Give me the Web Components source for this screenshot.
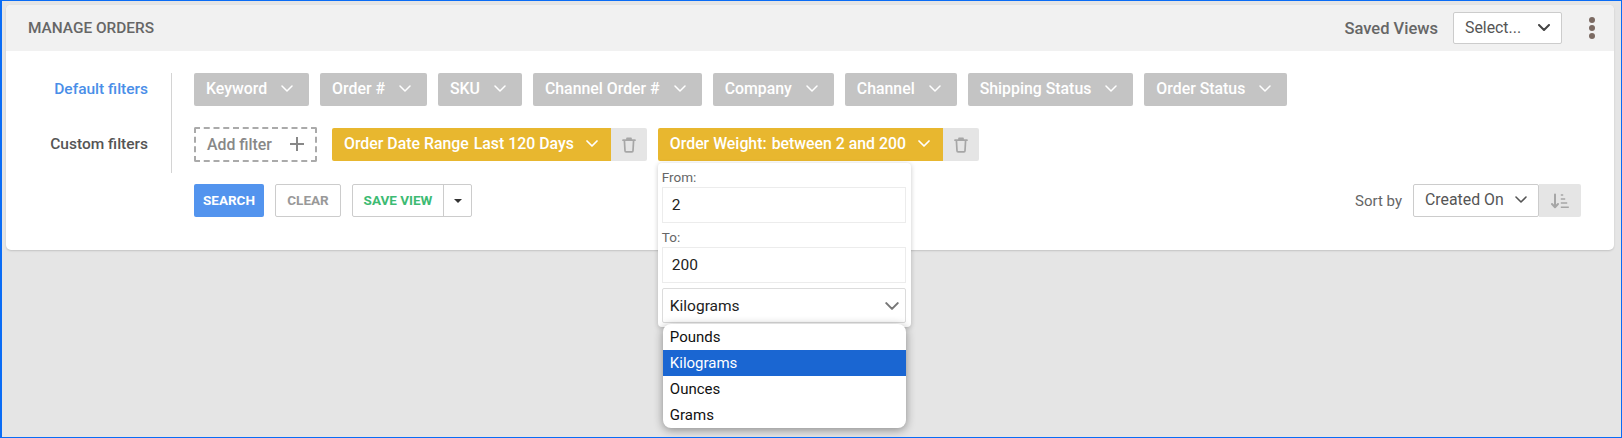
<!DOCTYPE html>
<html>
<head>
<meta charset="utf-8">
<style>
    html, body { margin: 0; padding: 0; }
    body { font-family: Roboto, "Liberation Sans", sans-serif; }
</style>
</head>
<body>
<orders-page>
    <orders-panel>
        <span slot="title">MANAGE ORDERS</span>
        <filter-row slot="filters" label="Default filters" active>
            <filter-chip>Keyword</filter-chip>
            <filter-chip>Order #</filter-chip>
            <filter-chip>SKU</filter-chip>
            <filter-chip>Channel Order #</filter-chip>
            <filter-chip>Company</filter-chip>
            <filter-chip>Channel</filter-chip>
            <filter-chip>Shipping Status</filter-chip>
            <filter-chip>Order Status</filter-chip>
        </filter-row>
        <filter-row slot="filters" label="Custom filters">
            <add-filter>Add filter</add-filter>
            <custom-chip name="Order Date Range" value="Last 120 Days"></custom-chip>
            <custom-chip name="Order Weight:" value="between 2 and 200">
                <weight-popover></weight-popover>
            </custom-chip>
        </filter-row>
    </orders-panel>
</orders-page>

<script>
const chevron = (w, h, color, sw) => `<svg width="${w}" height="${h}" viewBox="0 0 12 7" fill="none" stroke="${color}" stroke-width="${sw}" stroke-linecap="round" stroke-linejoin="round"><path d="M1 1l5 5 5-5"/></svg>`;
const trash = `<svg width="14" height="16" viewBox="0 0 14 16" fill="none" stroke="#a6a6a6" stroke-width="1.7" stroke-linecap="round" stroke-linejoin="round"><path d="M1 3.2h12M5 3V1.4h4V3M2.4 3.4l.6 10.4c0 .6.5 1.1 1.1 1.1h5.8c.6 0 1.1-.5 1.1-1.1l.6-10.4"/></svg>`;

// orders-page
const ordersPageTemplate = document.createElement("template");
ordersPageTemplate.innerHTML = /*html*/`
    <style>
        :host {
            display: block;
            box-sizing: border-box;
            height: 438px;
            overflow: hidden;
            background: #e5e5e5;
            border: 1px solid #0a6cf5;
            border-left-width: 2px;
            padding: 4px 7px 0 4px;
        }
    </style>
    <slot></slot>
`;
class OrdersPage extends HTMLElement {
    constructor() {
        super();
        this.attachShadow({mode: "open"});
        this.shadowRoot.appendChild(ordersPageTemplate.content.cloneNode(true));
    }
}
window.customElements.define("orders-page", OrdersPage);

// orders-panel
const ordersPanelTemplate = document.createElement("template");
ordersPanelTemplate.innerHTML = /*html*/`
    <style>
        :host {
            display: block;
            background: #fff;
            border-radius: 5px;
            box-shadow: 0 1px 2px rgba(0,0,0,.15);
            height: 245px;
            color: #555;
        }
        header {
            display: flex;
            align-items: center;
            height: 46px;
            background: #f1f1f1;
            border-radius: 5px 5px 0 0;
            padding: 0 18px 0 22px;
        }
        .title { flex: 1; font-size: 15.4px; font-weight: 500; color: #666; }
        .views { font-size: 16.5px; font-weight: 500; color: #666; margin-right: 15px; }
        .kebab { display: flex; flex-direction: column; gap: 2px; margin-left: 27px; width: 6px; margin-right: 1px; }
        .kebab i { width: 6px; height: 6px; border-radius: 50%; background: #7b6a62; }
        .body { padding: 22px 0 0 0; }
        .filters { display: grid; row-gap: 22px; }
        .actions { display: flex; align-items: center; padding: 11px 33px 0 188px; gap: 11px; }
        .spacer { flex: 1; }
        .sort { font-size: 15px; color: #666; }
        .sortbtn { width: 42px; height: 33px; background: #e5e5e5; border-radius: 0 2px 2px 0; display: flex; align-items: center; justify-content: center; margin-left: -11px; }
    </style>
    <header>
        <div class="title"><slot name="title"></slot></div>
        <span class="views">Saved Views</span>
        <select-box width="109" height="32" text="Select..." pad="11" dark></select-box>
        <div class="kebab"><i></i><i></i><i></i></div>
    </header>
    <div class="body">
        <div class="filters"><slot name="filters"></slot></div>
        <div class="actions">
            <action-button kind="search">SEARCH</action-button>
            <action-button kind="clear">CLEAR</action-button>
            <save-button></save-button>
            <span class="spacer"></span>
            <span class="sort">Sort by</span>
            <select-box width="126" height="33" text="Created On" pad="11"></select-box>
            <span class="sortbtn">
                <svg width="18" height="16" viewBox="0 0 18 16" fill="none" stroke="#a6a6a6" stroke-width="2" stroke-linecap="round" stroke-linejoin="round"><path d="M4 1.5v12.5M1 11l3 3.2 3-3.2"/><path d="M9.8 2h2.4M9.8 6h4.4M9.8 10h6.4M9.8 14.2h8" stroke-width="1.5" stroke-linecap="butt"/></svg>
            </span>
        </div>
    </div>
`;
class OrdersPanel extends HTMLElement {
    constructor() {
        super();
        this.attachShadow({mode: "open"});
        this.shadowRoot.appendChild(ordersPanelTemplate.content.cloneNode(true));
    }
}
window.customElements.define("orders-panel", OrdersPanel);

// filter-row
const filterRowTemplate = document.createElement("template");
filterRowTemplate.innerHTML = /*html*/`
    <style>
        :host {
            display: flex;
            align-items: stretch;
        }
        .label {
            box-sizing: border-box;
            width: 165px;
            padding-right: 23px;
            height: 33px;
            line-height: 32px;
            text-align: right;
            font-size: 15.5px;
            font-weight: 500;
            color: #555;
            white-space: nowrap;
        }
        :host([active]) .label { color: #4a8ee8; }
        .list {
            display: flex;
            gap: 11px;
            padding-left: 22px;
            border-left: 1px solid #d4d4d4;
        }
        :host([active]) .list { padding-bottom: 22px; margin-bottom: -22px; }
        :host(:not([active])) .list { padding-bottom: 12px; }
    </style>
    <div class="label"></div>
    <div class="list"><slot></slot></div>
`;
class FilterRow extends HTMLElement {
    constructor() {
        super();
        this.attachShadow({mode: "open"});
        this.shadowRoot.appendChild(filterRowTemplate.content.cloneNode(true));
        this.shadowRoot.querySelector(".label").textContent = this.getAttribute("label");
    }
}
window.customElements.define("filter-row", FilterRow);

// filter-chip
const filterChipTemplate = document.createElement("template");
filterChipTemplate.innerHTML = /*html*/`
    <style>
        :host {
            display: flex;
            align-items: center;
            height: 33px;
            box-sizing: border-box;
            padding: 0 16px 2px 12px;
            gap: 14px;
            background: #c4c4c4;
            border-radius: 2px;
            color: #fff;
            font-size: 15.85px;
            font-weight: 500;
            white-space: nowrap;
        }
    </style>
    <slot></slot>
    ${chevron(12, 7, "#fff", 1.5)}
`;
class FilterChip extends HTMLElement {
    constructor() {
        super();
        this.attachShadow({mode: "open"});
        this.shadowRoot.appendChild(filterChipTemplate.content.cloneNode(true));
    }
}
window.customElements.define("filter-chip", FilterChip);

// add-filter
const addFilterTemplate = document.createElement("template");
addFilterTemplate.innerHTML = /*html*/`
    <style>
        :host {
            display: flex;
            align-items: center;
            justify-content: space-between;
            box-sizing: border-box;
            width: 123px;
            height: 35px;
            margin: -1px 4px -1px 0;
            padding: 0 11px 1px 11px;
            border: 2px dashed #aaa;
            border-radius: 2px;
            color: #888;
            font-size: 15.85px;
            font-weight: 500;
        }
    </style>
    <slot></slot>
    <svg width="14" height="14" viewBox="0 0 14 14" stroke="#888" stroke-width="2"><path d="M7 0v14M0 7h14"/></svg>
`;
class AddFilter extends HTMLElement {
    constructor() {
        super();
        this.attachShadow({mode: "open"});
        this.shadowRoot.appendChild(addFilterTemplate.content.cloneNode(true));
    }
}
window.customElements.define("add-filter", AddFilter);

// custom-chip
const customChipTemplate = document.createElement("template");
customChipTemplate.innerHTML = /*html*/`
    <style>
        :host {
            display: flex;
            position: relative;
            height: 33px;
            font-size: 15.85px;
            white-space: nowrap;
        }
        .main {
            display: flex;
            align-items: center;
            box-sizing: border-box;
            padding: 0 13px 2px 12px;
            background: #e8b72f;
            color: #fff;
            font-weight: 500;
            border-radius: 2px 0 0 2px;
        }
        .name { margin-right: 5px; }
        .value { margin-right: 12px; }
        .del {
            width: 36px;
            display: flex;
            align-items: center;
            justify-content: center;
            background: #e5e5e5;
            border-radius: 0 2px 2px 0;
        }
    </style>
    <div class="main">
        <span class="name"></span><span class="value"></span>
        ${chevron(12, 7, "#fff", 1.7)}
    </div>
    <div class="del">${trash}</div>
    <slot></slot>
`;
class CustomChip extends HTMLElement {
    constructor() {
        super();
        this.attachShadow({mode: "open"});
        this.shadowRoot.appendChild(customChipTemplate.content.cloneNode(true));
        this.shadowRoot.querySelector(".name").textContent = this.getAttribute("name");
        this.shadowRoot.querySelector(".value").textContent = this.getAttribute("value");
    }
}
window.customElements.define("custom-chip", CustomChip);

// select-box
const selectBoxTemplate = document.createElement("template");
selectBoxTemplate.innerHTML = /*html*/`
    <style>
        :host {
            display: flex;
            align-items: center;
            justify-content: space-between;
            box-sizing: border-box;
            background: #fff;
            border: 1px solid #ccc;
            border-radius: 2px;
            color: #555;
            font-size: 15.85px;
        }
        .icon { display: flex; }
    </style>
    <span class="text"></span>
    <span class="icon"></span>
`;
class SelectBox extends HTMLElement {
    constructor() {
        super();
        this.attachShadow({mode: "open"});
        this.shadowRoot.appendChild(selectBoxTemplate.content.cloneNode(true));
        this.style.width = this.getAttribute("width") + "px";
        this.style.height = this.getAttribute("height") + "px";
        this.style.padding = `0 ${this.getAttribute("pad")}px 2px`;
        this.shadowRoot.querySelector(".text").textContent = this.getAttribute("text");
        const dark = this.hasAttribute("dark");
        this.shadowRoot.querySelector(".icon").innerHTML = chevron(12, 7, dark ? "#444" : "#555", dark ? 2 : 1.6);
    }
}
window.customElements.define("select-box", SelectBox);

// action-button
const actionButtonTemplate = document.createElement("template");
actionButtonTemplate.innerHTML = /*html*/`
    <style>
        :host {
            display: flex;
            align-items: center;
            justify-content: center;
            box-sizing: border-box;
            height: 33px;
            padding-bottom: 1px;
            border-radius: 2px;
            font-size: 13.5px;
            font-weight: 700;
        }
        :host([kind="search"]) { width: 70px; background: #5394ee; color: #fff; }
        :host([kind="clear"]) { width: 66px; background: #fff; color: #999; border: 1px solid #ccc; }
    </style>
    <slot></slot>
`;
class ActionButton extends HTMLElement {
    constructor() {
        super();
        this.attachShadow({mode: "open"});
        this.shadowRoot.appendChild(actionButtonTemplate.content.cloneNode(true));
    }
}
window.customElements.define("action-button", ActionButton);

// save-button
const saveButtonTemplate = document.createElement("template");
saveButtonTemplate.innerHTML = /*html*/`
    <style>
        :host {
            display: flex;
            box-sizing: border-box;
            width: 120px;
            height: 33px;
            background: #fff;
            border: 1px solid #ccc;
            border-radius: 2px;
            font-size: 13.5px;
            font-weight: 700;
            color: #3dbb73;
        }
        .main { flex: 1; display: flex; align-items: center; justify-content: center; padding-bottom: 1px; border-right: 1px solid #ccc; }
        .caret { width: 27px; display: flex; align-items: center; justify-content: center; }
        .caret i { border: 4px solid transparent; border-top: 4px solid #333; border-bottom: 0; display: block; }
    </style>
    <div class="main">SAVE VIEW</div>
    <div class="caret"><i></i></div>
`;
class SaveButton extends HTMLElement {
    constructor() {
        super();
        this.attachShadow({mode: "open"});
        this.shadowRoot.appendChild(saveButtonTemplate.content.cloneNode(true));
    }
}
window.customElements.define("save-button", SaveButton);

// weight-popover
const weightPopoverTemplate = document.createElement("template");
weightPopoverTemplate.innerHTML = /*html*/`
    <style>
        :host {
            position: absolute;
            left: 0;
            top: 35px;
            z-index: 2;
            box-sizing: border-box;
            width: 253px;
            height: 164px;
            padding: 7px 5px 0 4px;
            background: #fff;
            border-radius: 4px;
            box-shadow: 0 1px 5px rgba(0,0,0,.22);
            font-size: 13.5px;
            font-weight: 400;
            color: #666;
        }
        label { display: block; line-height: 15px; padding-bottom: 2px; }
        .field {
            box-sizing: border-box;
            height: 36px;
            margin-bottom: 7px;
            padding-left: 9px;
            line-height: 34px;
            border: 1px solid #ececec;
            color: #222;
            font-size: 15.5px;
        }
        .unit {
            box-sizing: border-box;
            display: flex;
            align-items: center;
            justify-content: space-between;
            height: 35px;
            margin-top: 5px;
            padding: 0 6px 0 7px;
            border: 1px solid #dcdcdc;
            border-radius: 2px;
            color: #222;
            font-size: 15.5px;
        }
    </style>
    <label>From:</label>
    <div class="field">2</div>
    <label>To:</label>
    <div class="field" style="margin-bottom:0">200</div>
    <div class="unit">Kilograms ${chevron(14, 8, "#777", 1.8)}</div>
    <option-list></option-list>
`;
class WeightPopover extends HTMLElement {
    constructor() {
        super();
        this.attachShadow({mode: "open"});
        this.shadowRoot.appendChild(weightPopoverTemplate.content.cloneNode(true));
    }
}
window.customElements.define("weight-popover", WeightPopover);

// option-list
const optionListTemplate = document.createElement("template");
optionListTemplate.innerHTML = /*html*/`
    <style>
        :host {
            position: absolute;
            left: 5px;
            top: 161px;
            width: 243px;
            box-sizing: border-box;
            background: #fff;
            border-radius: 8px;
            overflow: hidden;
            box-shadow: 0 2px 10px rgba(0,0,0,.4);
            color: #111;
            font-size: 15px;
        }
        div { height: 26px; line-height: 26px; padding-left: 7px; }
        div:first-child { margin-top: 1px; }
        .sel { background: #1a66d2; color: #fff; }
    </style>
    <div>Pounds</div>
    <div class="sel">Kilograms</div>
    <div>Ounces</div>
    <div>Grams</div>
`;
class OptionList extends HTMLElement {
    constructor() {
        super();
        this.attachShadow({mode: "open"});
        this.shadowRoot.appendChild(optionListTemplate.content.cloneNode(true));
    }
}
window.customElements.define("option-list", OptionList);
</script>
</body>
</html>
